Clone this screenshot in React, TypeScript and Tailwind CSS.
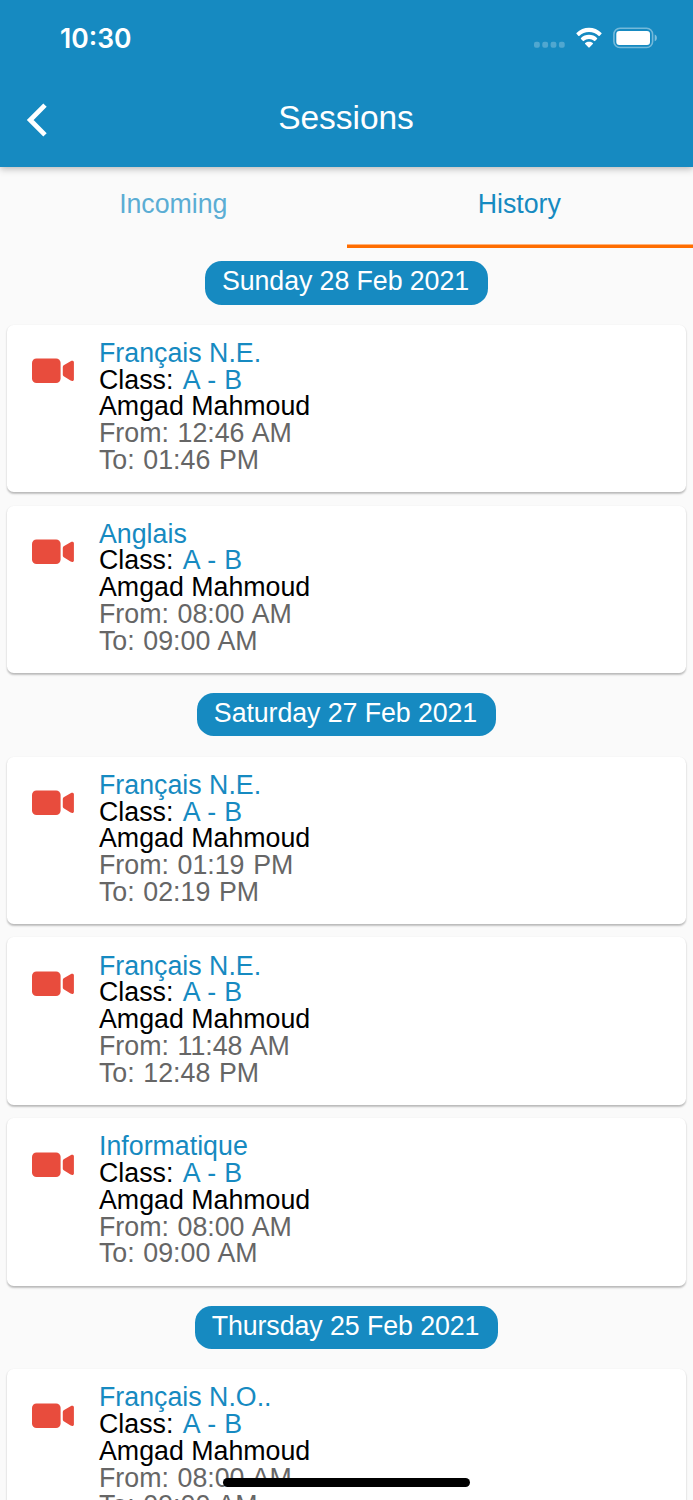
import React from 'react';

interface Session {
  id: number;
  subject: string;
  from: string;
  to: string;
}

interface SessionDay {
  date: string;
  sessions: Session[];
}

const days: SessionDay[] = [
  {
    date: 'Sunday 28 Feb 2021',
    sessions: [
      { id: 1, subject: 'Français N.E.', from: '12:46 AM', to: '01:46 PM' },
      { id: 2, subject: 'Anglais', from: '08:00 AM', to: '09:00 AM' },
    ],
  },
  {
    date: 'Saturday 27 Feb 2021',
    sessions: [
      { id: 3, subject: 'Français N.E.', from: '01:19 PM', to: '02:19 PM' },
      { id: 4, subject: 'Français N.E.', from: '11:48 AM', to: '12:48 PM' },
      { id: 5, subject: 'Informatique', from: '08:00 AM', to: '09:00 AM' },
    ],
  },
  {
    date: 'Thursday 25 Feb 2021',
    sessions: [{ id: 6, subject: 'Français N.O..', from: '08:00 AM', to: '09:00 AM' }],
  },
];

const StatusBar: React.FC = () => (
  <div className="flex h-[76px] items-center justify-between pl-[60px] pr-[34px]">
    <span className="font-['Inter',sans-serif] text-[26.5px] font-semibold leading-none">10:30</span>
    <div className="flex items-center">
      <svg width="32" height="22" viewBox="0 0 32 22" className="mr-[9px]" fill="#fff" fillOpacity="0.25">
        <rect x="0" y="14.8" width="5.8" height="6" rx="2" />
        <rect x="8.3" y="14.8" width="5.8" height="6" rx="2" />
        <rect x="16.6" y="14.8" width="5.8" height="6" rx="2" />
        <rect x="24.9" y="14.8" width="5.8" height="6" rx="2" />
      </svg>
      <svg width="28" height="22" viewBox="0 0 28 22" className="mr-[10px]" fill="#fff">
        <path d="M14 4.900c3.700 0 7.200 1.500 9.800 4 .2.200.5.200.7 0l2-2.100c.3-.3.300-.6 0-.9C23.100 2.700 18.700.8 14 .8S4.900 2.700 1.500 5.900c-.3.300-.3.600 0 .9l2 2.100c.2.200.5.200.7 0 2.600-2.500 6.100-4 9.800-4z" />
        <path d="M14 11.900c2 0 3.900.8 5.300 2.100.2.200.5.200.7 0l2-2.100c.3-.3.300-.6 0-.9-2.100-2-4.900-3.200-8-3.200s-5.900 1.200-8 3.200c-.3.300-.3.600 0 .9l2 2.100c.2.200.5.200.7 0 1.400-1.300 3.300-2.100 5.300-2.100z" />
        <path d="M17.800 17c.3-.3.300-.6 0-.9-1-.9-2.400-1.400-3.800-1.400s-2.800.5-3.800 1.400c-.3.300-.3.600 0 .9l3.400 3.600c.2.200.6.200.8 0z" />
      </svg>
      <svg width="46" height="22" viewBox="0 0 46 22">
        <rect x="0.900" y="1.200" width="38.700" height="19.300" rx="6" fill="none" stroke="#fff" strokeOpacity="0.4" strokeWidth="1.600" />
        <rect x="3.300" y="3.900" width="33.700" height="14" rx="3" fill="#fff" />
        <path d="M41.700 7.600c1.400.6 2.200 1.900 2.200 3.300s-.8 2.700-2.200 3.300z" fill="#fff" fillOpacity="0.45" />
      </svg>
    </div>
  </div>
);

const Header: React.FC = () => (
  <header className="relative z-10 h-[167.4px] shrink-0 bg-[#168ac1] text-white shadow-[0_3px_7px_rgba(0,0,0,0.17),0_1px_5px_rgba(0,0,0,0.1)]">
    <StatusBar />
    <div className="grid h-[84px] grid-cols-[90px_1fr_90px] items-center">
      <button className="pl-[26px] pt-[4px]" aria-label="Back">
        <svg width="22" height="34" viewBox="0 0 22 34" fill="none" stroke="#fff" strokeWidth="4.800">
          <path d="M19 2.100 4.200 17 19 31.900" />
        </svg>
      </button>
      <h1 className="pr-px text-center text-[33.5px] leading-none tracking-[-0.05px]">Sessions</h1>
    </div>
  </header>
);

const Tabs: React.FC = () => (
  <nav className="grid h-[80.35px] shrink-0 grid-cols-2 text-[26.78px] tracking-[-0.05px] text-[#168ac1]">
    <button className="pb-[7px] text-[#5badd4]">Incoming</button>
    <button className="flex flex-col items-center">
      <span className="flex flex-1 items-center pb-[3px] pr-px">History</span>
      <span className="h-[4px] w-full border-t border-[#ffb27a] bg-[#ff6d00]"></span>
    </button>
  </nav>
);

const VideoIcon: React.FC = () => (
  <svg width="43" height="26" viewBox="0 0 43 26" fill="#e84c3d">
    <rect x="0" y="0.400" width="28.600" height="24.700" rx="4.500" />
    <path d="M30.800 9c0-.7.300-1.300.900-1.700l6.900-4.100c1.500-.9 3.300-.5 3.300 1v17.200c0 1.500-1.800 1.900-3.300 1l-6.900-4.100c-.6-.4-.9-1-.9-1.700z" />
  </svg>
);

const SessionCard: React.FC<{ session: Session }> = ({ session }) => (
  <article className="flex h-[167.4px] rounded-[6.7px] bg-white pl-[25.3px] pt-[15.2px] shadow-[0_1.500px_2px_rgba(0,0,0,0.22),0_1px_2px_rgba(0,0,0,0.06)]">
    <div className="w-[67px] pt-[18.4px]">
      <VideoIcon />
    </div>
    <div className="text-[26.78px] leading-[26.78px] text-[#666]">
      <p className="text-[#168ac1]">{session.subject}</p>
      <p className="text-black">
        Class: <span className="ml-[2px] text-[#168ac1] [word-spacing:0.7px]">A - B</span>
      </p>
      <p className="text-black">Amgad Mahmoud</p>
      <p className="[word-spacing:1.200px]">From: {session.from}</p>
      <p className="[word-spacing:1.200px]">To: {session.to}</p>
    </div>
  </article>
);

const App: React.FC = () => {
  return (
    <div className="relative flex h-[1500px] w-[693px] flex-col overflow-hidden bg-[#fafafa] font-['Liberation_Sans',Arial,sans-serif]">
      <Header />
      <Tabs />
      <main className="min-h-0 flex-1 overflow-hidden">
        {days.map((day) => (
          <section key={day.date} className="pb-[6.7px]">
            <div className="flex justify-center pb-[20.1px] pt-[13.4px]">
              <h2 className="h-[43.5px] rounded-[16.7px] bg-[#168ac1] pl-[17px] pr-[19px] pt-[5px] text-[26.78px] leading-[30px] tracking-[-0.08px] text-white">
                {day.date}
              </h2>
            </div>
            <div className="flex flex-col gap-[13.4px] px-[6.7px]">
              {day.sessions.map((session) => (
                <SessionCard key={session.id} session={session} />
              ))}
            </div>
          </section>
        ))}
      </main>

      {/* Home indicator */}
      <div className="absolute bottom-[13.500px] left-[223px] h-[8.400px] w-[247px] rounded-full bg-black"></div>
    </div>
  );
};

export default App;
